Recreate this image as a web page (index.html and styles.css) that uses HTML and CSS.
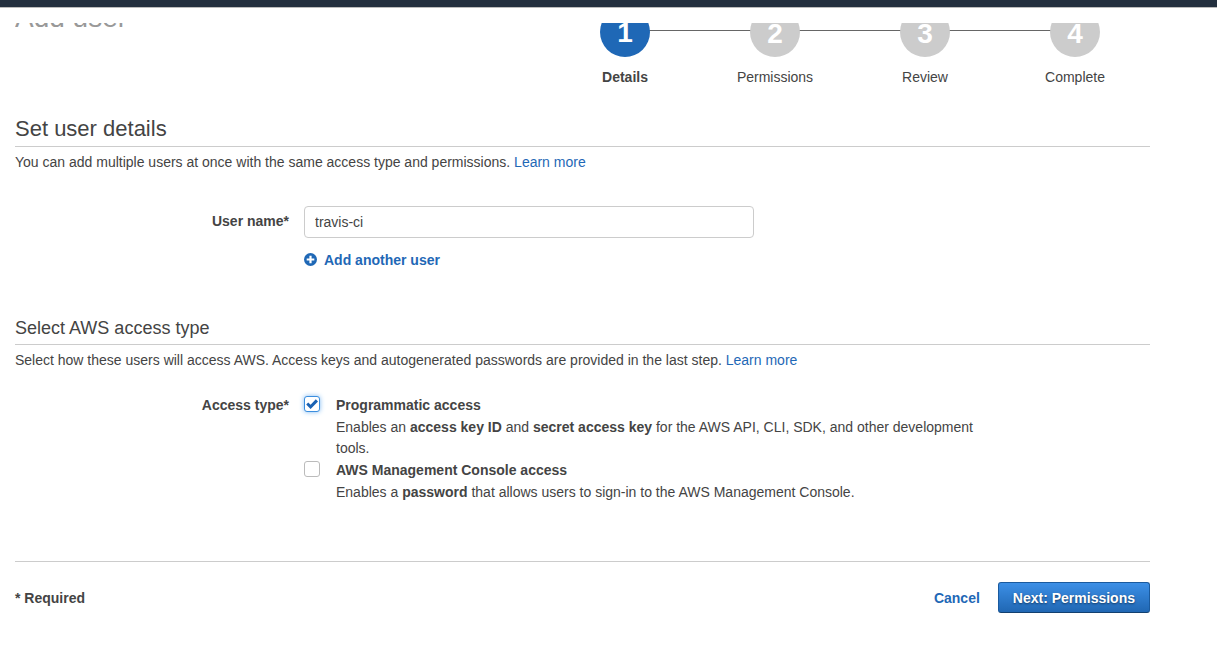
FILE: index.html
```html
<!DOCTYPE html>
<html lang="en">
<head>
<meta charset="utf-8">
<meta name="viewport" content="width=device-width, initial-scale=1">
<title>Add user</title>
<link rel="stylesheet" href="styles.css">
</head>
<body>
<div class="topbar"></div>
<main class="wizard">
  <div class="wizard-scroll">
    <header class="wizard-header">
      <h1 class="wizard-title">Add user</h1>
      <ol class="steps">
        <li class="step step-current" aria-current="step"><span class="step-number">1</span><span class="step-name">Details</span></li>
        <li class="step"><span class="step-number">2</span><span class="step-name">Permissions</span></li>
        <li class="step"><span class="step-number">3</span><span class="step-name">Review</span></li>
        <li class="step"><span class="step-number">4</span><span class="step-name">Complete</span></li>
      </ol>
    </header>
  </div>
  <form>
    <section class="section">
      <h2 class="section-title">Set user details</h2>
      <p class="section-intro">You can add multiple users at once with the same access type and permissions. <a href="#">Learn more</a></p>
      <div class="field">
        <label class="field-label" for="user-name">User name*</label>
        <div class="field-body">
          <input class="text-input" id="user-name" type="text" value="travis-ci">
          <button class="add-button" type="button">
            <svg class="add-icon" viewBox="0 0 14 14" aria-hidden="true"><circle cx="6.5" cy="6.5" r="6.5" fill="#1f68b6"/><path d="M6.5 2.7v7.6M2.7 6.5h7.6" stroke="#fff" stroke-width="2.2"/></svg>
            Add another user
          </button>
        </div>
      </div>
    </section>
    <section class="section access">
      <h3 class="section-title section-title-small">Select AWS access type</h3>
      <p class="section-intro">Select how these users will access AWS. Access keys and autogenerated passwords are provided in the last step. <a href="#">Learn more</a></p>
      <div class="field" role="group" aria-labelledby="access-label">
        <span class="field-label" id="access-label">Access type*</span>
        <div class="choices">
          <div class="choice">
            <span class="checkbox">
              <input class="checkbox-input" type="checkbox" id="programmatic" checked>
              <svg class="checkbox-mark" viewBox="0 0 16 16" aria-hidden="true"><path d="M2.2 8.6l2-2 2.4 2.1 5.2-5.4 2.2 2.1-7.4 7.6z" fill="#1a62b3"/></svg>
            </span>
            <div>
              <label class="choice-name" for="programmatic">Programmatic access</label>
              <p class="choice-text">Enables an <b>access key ID</b> and <b>secret access key</b> for the AWS API, CLI, SDK, and other development tools.</p>
            </div>
          </div>
          <div class="choice">
            <span class="checkbox">
              <input class="checkbox-input" type="checkbox" id="console">
              <svg class="checkbox-mark" viewBox="0 0 16 16" aria-hidden="true"><path d="M2.2 8.6l2-2 2.4 2.1 5.2-5.4 2.2 2.1-7.4 7.6z" fill="#1a62b3"/></svg>
            </span>
            <div>
              <label class="choice-name" for="console">AWS Management Console access</label>
              <p class="choice-text">Enables a <b>password</b> that allows users to sign-in to the AWS Management Console.</p>
            </div>
          </div>
        </div>
      </div>
    </section>
    <footer class="actions">
      <span class="required">* Required</span>
      <a class="cancel" href="#">Cancel</a>
      <button class="next" type="submit">Next: Permissions</button>
    </footer>
  </form>
</main>
</body>
</html>
```

FILE: styles.css
```css
* {
  box-sizing: border-box;
}

body {
  margin: 0;
  background: #fff;
  color: #444;
  font: 14px/22px "Helvetica Neue", "Liberation Sans", Arial, sans-serif;
}

h1, h2, h3, p, ol {
  margin: 0;
  padding: 0;
}

a {
  color: #1f68b6;
  text-decoration: none;
}

button, input {
  font: inherit;
}

.topbar {
  height: 8px;
  background: #232f3e;
  border-bottom: 1px solid #bbb;
}

.wizard {
  padding: 15px 67px 0 15px;
}

/* The header is partly scrolled out of view under the top bar. */
.wizard-scroll {
  overflow: hidden;
}

.wizard-header {
  display: flex;
  justify-content: space-between;
  margin-top: -16px;
}

.wizard-title {
  color: #999;
  font-size: 28px;
  font-weight: 400;
  line-height: 22px;
}

.steps {
  display: flex;
  list-style: none;
}

.step {
  position: relative;
  display: flex;
  flex-direction: column;
  align-items: center;
  gap: 9px;
  width: 150px;
}

.step + .step::before {
  content: "";
  position: absolute;
  top: 23px;
  right: 50%;
  z-index: -1;
  width: 100%;
  height: 1px;
  background: #666;
}

.step-number {
  width: 50px;
  height: 50px;
  border-radius: 50%;
  background: #ccc;
  color: #fff;
  font-size: 28px;
  font-weight: 700;
  line-height: 54px;
  text-align: center;
}

.step-current .step-number {
  background: #1f68b6;
  line-height: 52px;
}

.step-current .step-name {
  font-weight: 700;
}

.section {
  padding-top: 26px;
}

.section-title {
  padding-bottom: 3px;
  border-bottom: 1px solid #ccc;
  font-size: 22px;
  font-weight: 400;
  line-height: 29px;
}

.section-title-small {
  padding-bottom: 5px;
  font-size: 18px;
  line-height: 22px;
}

.section-intro {
  padding-top: 4px;
}

.field {
  display: grid;
  grid-template-columns: 274px minmax(0, 1fr);
  column-gap: 15px;
  padding-top: 33px;
}

.field-label {
  padding-top: 4px;
  font-weight: 700;
  text-align: right;
}

.text-input {
  display: block;
  width: 100%;
  max-width: 450px;
  height: 32px;
  padding: 0 10px;
  border: 1px solid #ccc;
  border-radius: 4px;
  color: #444;
}

.add-button {
  display: flex;
  align-items: center;
  gap: 6px;
  margin-top: 11px;
  padding: 0;
  border: 0;
  background: none;
  color: #1f68b6;
  font-weight: 700;
}

.add-icon {
  width: 14px;
  height: 14px;
}

.access {
  padding-top: 46px;
}

.access .field {
  padding-top: 23px;
}

.access .field-label {
  padding-top: 0;
}

.choices {
  max-width: 690px;
}

.choice {
  display: flex;
  gap: 16px;
}

.checkbox {
  position: relative;
  flex: none;
  width: 16px;
  height: 16px;
  margin-top: 2px;
}

.checkbox-input {
  display: block;
  width: 16px;
  height: 16px;
  margin: 0;
  border: 1px solid #bbb;
  border-radius: 3px;
  background: #fff;
  appearance: none;
}

.checkbox-mark {
  position: absolute;
  inset: 0;
  visibility: hidden;
  pointer-events: none;
}

.checkbox-input:checked {
  border-color: #3b8ede;
  box-shadow: 0 0 5px #7db9f2;
}

.checkbox-input:checked + .checkbox-mark {
  visibility: visible;
}

.choice-name {
  font-weight: 700;
}

.choice-text {
  padding-top: 1px;
  line-height: 21px;
}

.actions {
  display: flex;
  align-items: center;
  margin-top: 58px;
  padding: 20px 0;
  border-top: 1px solid #ccc;
  font-weight: 700;
}

.required {
  margin-right: auto;
}

.next {
  height: 31px;
  margin-left: 18px;
  padding: 0 14px;
  border: 1px solid #1a5a9e;
  border-bottom-color: #12406f;
  border-radius: 3px;
  background: linear-gradient(#3c8fe6, #2067b3);
  color: #fff;
  font-weight: 700;
  text-shadow: 0 1px 2px #123a66;
}
```
